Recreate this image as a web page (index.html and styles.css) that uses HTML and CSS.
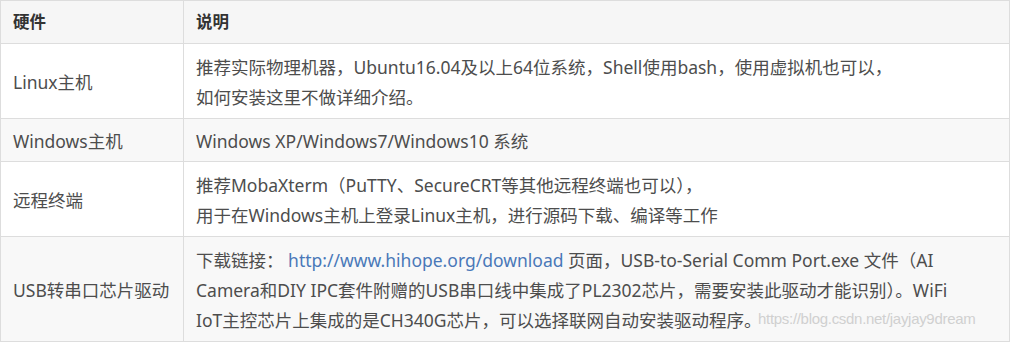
FILE: index.html
```html
<!DOCTYPE html>
<html lang="zh-CN">
<head>
<meta charset="utf-8">
<link rel="stylesheet" href="styles.css">
</head>
<body>
<div class="wrap">
<table class="hw">
  <thead>
    <tr><th class="c1">硬件</th><th>说明</th></tr>
  </thead>
  <tbody>
    <tr><td>Linux主机</td><td>推荐实际物理机器，Ubuntu16.04及以上64位系统，Shell使用bash，使用虚拟机也可以，<br>如何安装这里不做详细介绍。</td></tr>
    <tr class="alt single"><td>Windows主机</td><td>Windows XP/Windows7/Windows10 系统</td></tr>
    <tr><td>远程终端</td><td>推荐MobaXterm（PuTTY、SecureCRT等其他远程终端也可以），<br>用于在Windows主机上登录Linux主机，进行源码下载、编译等工作</td></tr>
    <tr class="alt"><td>USB转串口芯片驱动</td><td>下载链接： <a class="link" href="#">http://www.hihope.org/download</a> 页面，USB-to-Serial Comm Port.exe 文件（AI<br>Camera和DIY IPC套件附赠的USB串口线中集成了PL2302芯片，需要安装此驱动才能识别）。WiFi<br>IoT主控芯片上集成的是CH340G芯片，可以选择联网自动安装驱动程序。</td></tr>
  </tbody>
</table>
<span class="wm">https://blog.csdn.net/jayjay9dream</span>
</div>
</body>
</html>
```
FILE: styles.css
```css
html, body {
  margin: 0;
  padding: 0;
  background: #fff;
}
.wrap {
  position: relative;
  width: 1010px;
}
.hw {
  border-collapse: collapse;
  width: 1010px;
  font-family: "Noto Sans", "Noto Sans CJK SC", sans-serif;
  font-size: 17.5px;
  color: #4d4d4d;
  table-layout: fixed;
}
.hw th, .hw td {
  border: 1px solid #dddddd;
  padding: 8px 12px 6px;
  line-height: 30px;
  text-align: left;
  vertical-align: middle;
  white-space: nowrap;
}
.hw th {
  font-weight: bold;
  color: #333;
  background: #f6f6f6;
  padding: 6px 12px;
  font-size: 16.5px;
}
.hw .c1 {
  width: 158px;
}
.hw tr.single td {
  padding: 7px 12px 5px;
}
.hw tr.alt td {
  background: #f8f8f8;
}
.link {
  color: #4a78b8;
  text-decoration: none;
}
.wm {
  position: absolute;
  left: 758px;
  top: 310px;
  font-family: "Liberation Sans", sans-serif;
  font-size: 15px;
  color: #d0d0d0;
  letter-spacing: -0.3px;
  white-space: nowrap;
}
```
